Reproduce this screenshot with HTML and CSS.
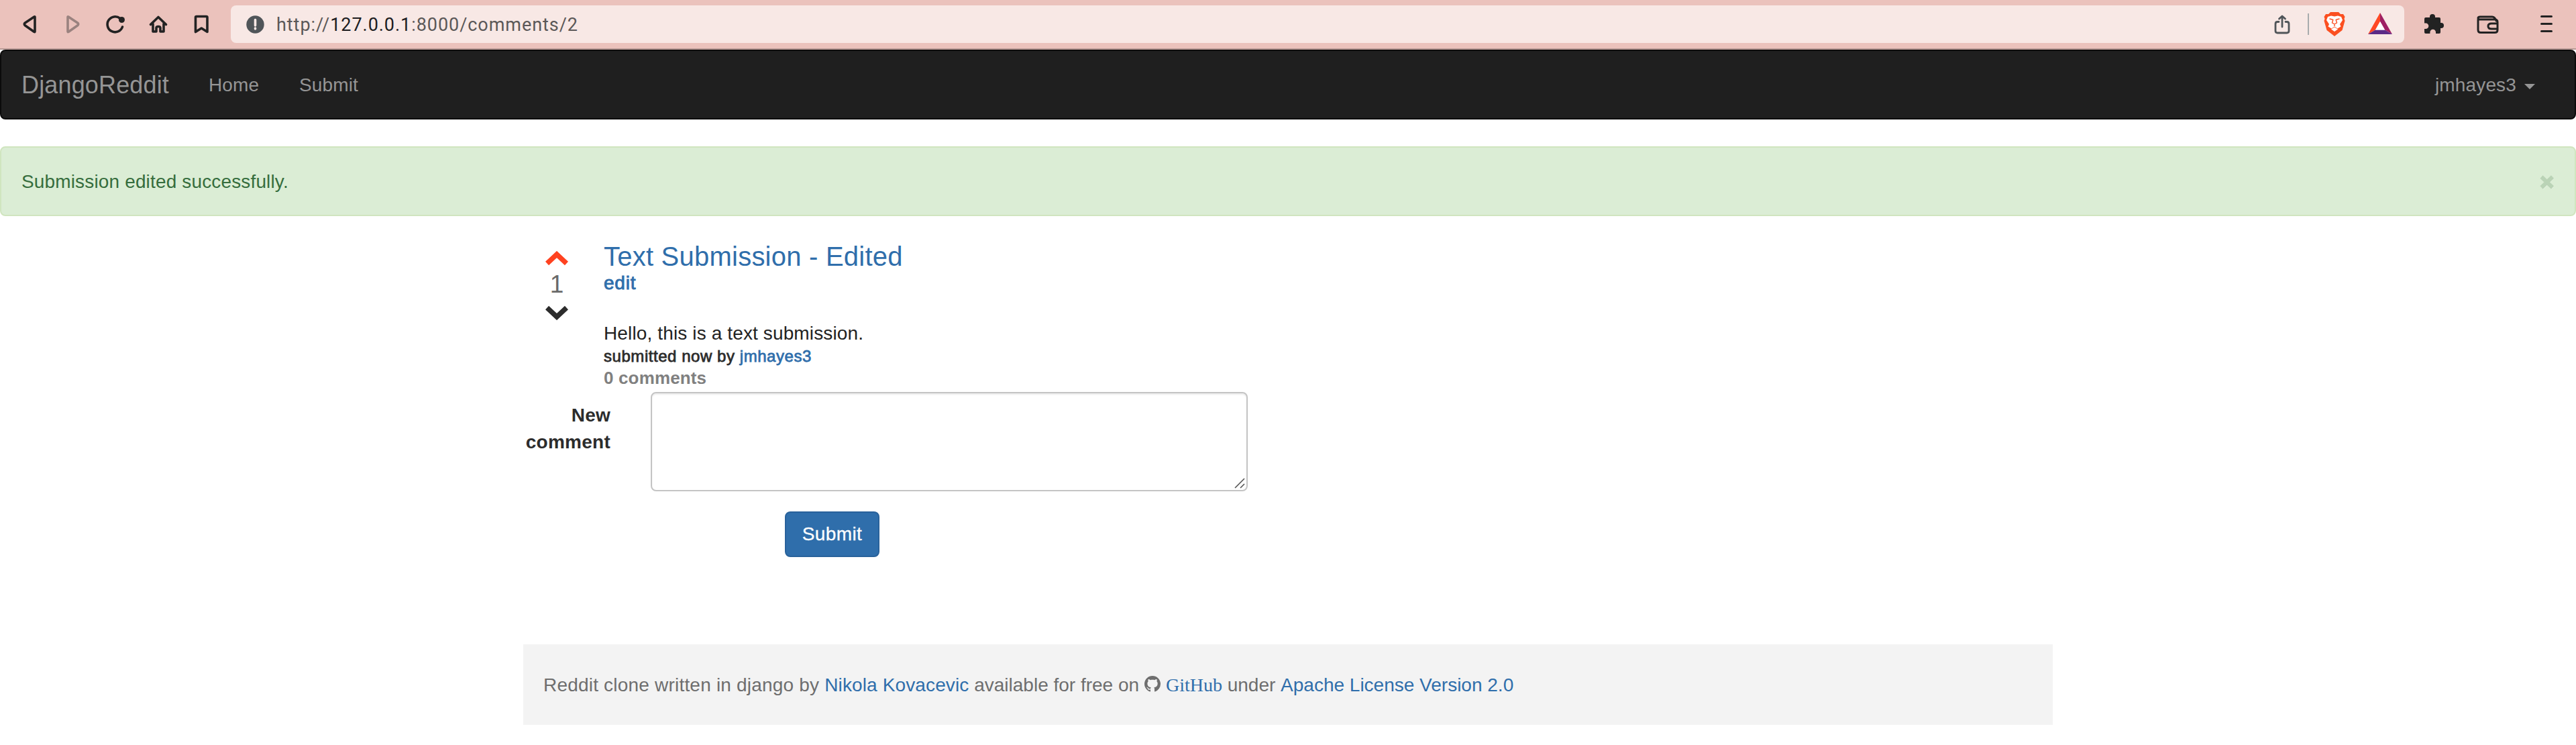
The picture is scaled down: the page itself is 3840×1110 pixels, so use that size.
FILE: index.html
```html
<!DOCTYPE html>
<html lang="en">
<head>
<meta charset="utf-8">
<title>DjangoReddit</title>
<link rel="stylesheet" href="styles.css">
</head>
<body>
<div class="toolbar">
  <svg class="tools-left" width="344" height="72" viewBox="0 0 344 72" fill="none" stroke="#222" stroke-width="3.6" stroke-linejoin="round" stroke-linecap="round">
    <path d="M52 25.500v21.500q0 1-1 .5L37.500 38q-2.500-2 0-4L51 25q1-.5 1 .5z"/>
    <path d="M101 25.500v21.500q0 1 1 .5L115.500 38q2.500-2 0-4L102 25q-1-.5-1 .5z" stroke="#9a827f"/>
    <path d="M182.500 40A11.500 11.500 0 1 1 179 27.500"/>
    <circle cx="181.500" cy="29.500" r="4.500" fill="#222" stroke="none"/>
    <path d="M224.500 36.500L236 25.500l11.500 11M228 35.500V47h5v-5.500q0-2 3-2t3 2V47h5V35.500"/>
    <path d="M291.500 26q0-1.500 1.500-1.500h14.500q1.500 0 1.500 1.500v21.500l-8.700-5.500-8.800 5.500z"/>
  </svg>
  <div class="address">
    <svg class="info" width="27" height="27" viewBox="0 0 27 27"><circle cx="13.500" cy="13.500" r="13.200" fill="#505559"/><path d="M13.500 6.500v8.500M13.500 19v1" stroke="#f8e8e5" stroke-width="3.600" stroke-linecap="round"/></svg>
    <span class="url">http://<b>127.0.0.1</b>:8000/comments/2</span>
    <svg class="address-icons" width="196" height="56" viewBox="3388 8 196 56" fill="none">
      <path d="M3397 32.500h-2q-3 0-3 3V46q0 3 3 3h14q3 0 3-3V35.500q0-3-3-3h-2M3402 40V24.500M3397.500 28l4.500-4 4.500 4" stroke="#505559" stroke-width="2.800" stroke-linecap="round" stroke-linejoin="round"/>
      <path d="M3441 20v32" stroke="#a7abad" stroke-width="2"/>
      <path d="M3474 18h12l3 3h4l2.500 4-1 3 1 3-4 14-11.500 9-11.500-9-4-14 1-3-1-3 2.500-4h4z" fill="#fb4f20"/>
      <path d="M3470 25l5-1.500 5 1 5-1 5 1.500 2 5-4 6 1.500 3.500-5 3-4.500-3-4.500 3-5-3 1.500-3.500-4-6zM3475 43.500l5-3 5 3-5 3.500z" fill="#fff"/>
      <path d="M3472.500 28l5 1.200M3487.500 28l-5 1.200M3478 29l-1.500 5 3.500 2 3.500-2-1.500-5M3480 36v3" stroke="#fb4f20" stroke-width="1.400"/>
      <path d="M3548 19v13l-7 12.500-11 6.500z" fill="#ff4724"/><path d="M3548 19l18 32-11-6.500-7-12.500z" fill="#9e1f63"/><path d="M3530 51l11-6.500h14l11 6.500z" fill="#5b2a86"/><path d="M3548 32l7 12.500h-14z" fill="#fff"/>
    </svg>
  </div>
  <svg class="tools-right" width="256" height="72" viewBox="3584 0 256 72" fill="none" stroke="#222" stroke-linecap="round" stroke-linejoin="round">
    <path d="M3616 26h6v-1a4 4 0 0 1 8 0v1h6q2 0 2 2v6h1a4 4 0 0 1 0 8h-1v6q0 2-2 2h-5v-2a4.300 4.300 0 0 0-8.600 0v2H3616q-2 0-2-2v-5h2a4.300 4.300 0 0 0 0-8.600h-2V28q0-2 2-2z" fill="#222" stroke="none"/>
    <path d="M3694 28.500v16q0 4 4 4h21q4 0 4-4V33q0-4-4-4h-22q-3 0-3-2t3-2h18q4 0 6 6M3723 35h-9q-5 0-5 4t5 4h9" stroke-width="3"/>
    <path d="M3788.500 24.500h15M3788.500 35.500h15M3788.500 46.500h15" stroke-width="3"/>
  </svg>
</div>

<nav class="navbar">
  <a class="brand">DjangoReddit</a>
  <a class="nav-home">Home</a>
  <a class="nav-submit">Submit</a>
  <a class="nav-user">jmhayes3<i class="caret"></i></a>
</nav>

<div class="alert">
  <span class="alert-text">Submission edited successfully.</span>
  <svg width="22" height="22" viewBox="0 0 22 22"><path d="M3 4l16 16M19 4L3 20" stroke="#edf6ea" stroke-width="6"/><path d="M2.500 3.500l16.500 16M19 3.500l-16.500 16" stroke="#bad3b6" stroke-width="6"/></svg>
</div>

<main class="container">
  <article class="post">
    <div class="vote">
      <svg width="34" height="22" viewBox="0 0 34 22"><path d="M2.500 18.500L17 5l14.500 13.500" fill="none" stroke="#ff4220" stroke-width="7.500"/></svg>
      <span class="score">1</span>
      <svg width="34" height="22" viewBox="0 0 34 22"><path d="M2.500 3.500L17 17 31.500 3.500" fill="none" stroke="#2c2c2c" stroke-width="7.500"/></svg>
    </div>
    <div class="body">
      <a class="title">Text Submission - Edited</a>
      <a class="edit">edit</a>
      <p class="text">Hello, this is a text submission.</p>
      <p class="meta">submitted now by <a>jmhayes3</a></p>
      <p class="count">0 comments</p>
    </div>
  </article>
  <form class="comment-form">
    <label class="label">New comment</label>
    <div class="fields">
      <div class="textarea"><svg width="16" height="16" viewBox="0 0 16 16"><path d="M1 15L15 1M9 15l6-6" stroke="#555" stroke-width="1.600"/></svg></div>
      <button type="button" class="submit">Submit</button>
    </div>
  </form>
  <footer class="footer">
    <span class="intro">Reddit clone written in django by </span><a class="author">Nikola Kovacevic</a><span> available for free on </span>
    <svg class="octocat" width="24" height="24" viewBox="0 0 16 16"><path fill="#6e6e6e" d="M8 0C3.580 0 0 3.580 0 8c0 3.540 2.290 6.530 5.470 7.590.4.070.55-.17.55-.38 0-.19-.01-.82-.01-1.490-2.010.37-2.530-.49-2.690-.94-.09-.23-.48-.94-.82-1.130-.28-.15-.68-.52-.01-.53.63-.01 1.080.58 1.230.82.72 1.210 1.870.87 2.330.66.07-.52.28-.87.51-1.070-1.780-.2-3.640-.89-3.640-3.950 0-.87.31-1.590.82-2.150-.08-.2-.36-1.020.08-2.120 0 0 .67-.21 2.200.82.64-.18 1.320-.27 2-.27s1.360.09 2 .27c1.530-1.040 2.200-.82 2.200-.82.44 1.100.16 1.920.08 2.120.51.56.82 1.270.82 2.150 0 3.070-1.870 3.750-3.650 3.950.29.25.54.73.54 1.480 0 1.070-.01 1.930-.01 2.200 0 .21.15.46.55.38A8.010 8.010 0 0 0 16 8c0-4.420-3.580-8-8-8z"/></svg>
    <a class="github">GitHub</a><span> under </span><a>Apache License Version 2.0</a>
  </footer>
</main>
</body>
</html>
```
FILE: styles.css
```css
* { box-sizing: border-box; }
body { margin: 0; background: #fff; color: #2c2c2c; font: 28px/40px "Liberation Sans", Arial, sans-serif; }
svg { display: block; flex: none; }
p { margin: 0; }
a { color: #2f6eab; }

.toolbar { display: flex; height: 74px; background: #ebc2bc; border-bottom: 2px solid #b79994; }
.address { display: flex; flex: 1; align-items: center; height: 56px; margin-top: 8px; padding-left: 23px; background: #f8e8e5; border-radius: 8px; }
.url { margin-left: 18px; padding-top: 2px; font: 27px/54px Roboto, sans-serif; color: #5b5858; letter-spacing: .95px; white-space: nowrap; }
.url b { font-weight: 400; color: #1d1d1f; }
.address-icons { margin-left: auto; }

.navbar { display: flex; align-items: center; height: 104px; padding: 2px 59px 0 30px; background: #1f1f1f; border: 2px solid #0b0b0b; border-radius: 8px; }
.navbar a { color: #959595; white-space: nowrap; letter-spacing: .15px; }
.navbar .brand { width: 279px; font-size: 36px; }
.nav-home { width: 135px; }
.nav-user { display: flex; align-items: center; margin-left: auto; }
.caret { margin: 4px 0 0 12px; border: 8px solid transparent; border-top-color: #959595; border-bottom: 0; }

.alert { display: flex; align-items: center; justify-content: space-between; height: 104px; margin-top: 40px; padding: 1px 30px 0; background: #dbedd5; border: 2px solid #d0e5bf; border-radius: 8px; color: #366d3d; }
.alert-text { letter-spacing: .15px; }

.container { width: 2280px; margin: 0 auto; padding-top: 40px; }
.post { display: flex; height: 222px; }
.vote { display: flex; flex-direction: column; align-items: center; width: 100px; padding-top: 12px; }
.score { height: 59px; line-height: 55px; font-size: 37px; color: #6a6a6a; }
.body { display: flex; flex-direction: column; padding-left: 20px; white-space: nowrap; }
.title { height: 44px; line-height: 40px; font-size: 40px; letter-spacing: .23px; }
.edit { height: 76px; line-height: 32px; letter-spacing: .8px; -webkit-text-stroke: .9px #2f6eab; }
.text { height: 38px; line-height: 42px; margin-top: -6px; color: #222; letter-spacing: .13px; }
.meta { font-size: 24px; line-height: 33px; letter-spacing: .55px; white-space: pre; -webkit-text-stroke: .8px currentColor; }
.count { font-size: 26px; line-height: 33px; font-weight: bold; color: #808080; letter-spacing: .15px; }

.comment-form { display: flex; height: 376px; }
.label { width: 130px; padding-top: 15px; font-weight: bold; text-align: right; letter-spacing: .25px; }
.fields { display: flex; flex-direction: column; width: 890px; margin-left: 60px; }
.textarea { display: flex; align-items: flex-end; justify-content: flex-end; height: 148px; padding: 2px; border: 2px solid #c4c4c4; border-radius: 8px; box-shadow: inset 0 2px 2px rgba(0, 0, 0, .075); }
.submit { width: 141px; height: 68px; margin: 30px 0 0 200px; padding: 0; border: 2px solid #29629b; border-radius: 8px; background: #2f6eab; color: #fff; font: inherit; letter-spacing: .4px; -webkit-text-stroke: .3px #fff; }

.footer { display: flex; align-items: center; height: 120px; padding: 2px 0 0 30px; background: #f3f3f3; color: #6e6e6e; white-space: pre; }
.intro { letter-spacing: .2px; }
.author { letter-spacing: .12px; }
.octocat { margin: -5px 8px 0 0; }
.github { font-family: "Liberation Serif", "Times New Roman", serif; }
```
